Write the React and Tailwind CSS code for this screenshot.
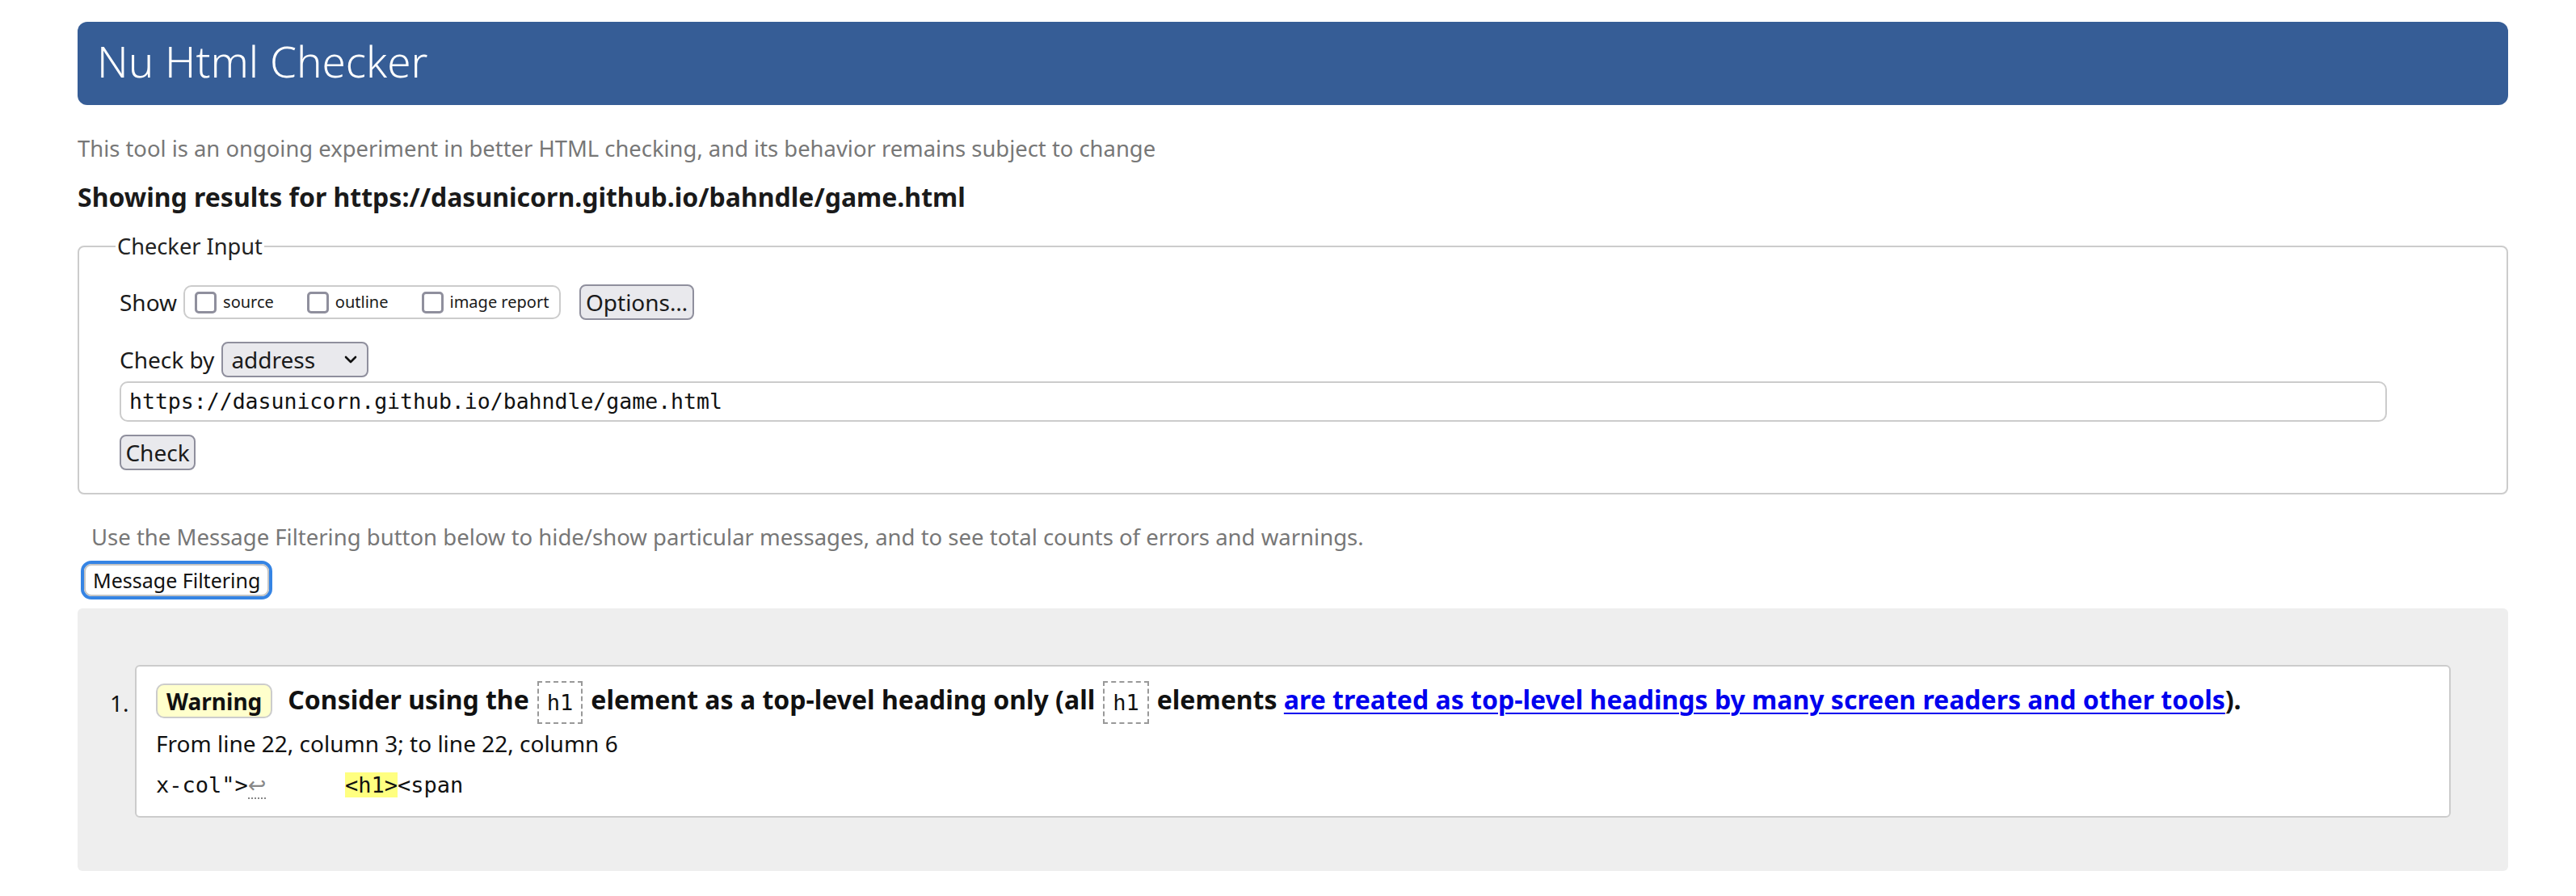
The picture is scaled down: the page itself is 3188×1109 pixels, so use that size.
import React from "react";

const sans = "font-['Noto_Sans','Open_Sans',sans-serif]";
const mono = "font-['DejaVu_Sans_Mono','Liberation_Mono',monospace]";

function Checkbox({ label }) {
  return (
    <span className="flex items-center whitespace-nowrap">
      <span className="w-[27px] h-[27px] border-[3px] border-[#8f8f9d] rounded-[5px] bg-white box-border" />
      <span className="ml-[8px] text-[20px] leading-none text-[#1a1a1a]">{label}</span>
    </span>
  );
}

function Code({ children }) {
  return (
    <span className={`${mono} font-normal inline-block border-2 border-dashed border-[#999] px-[10px] leading-[49px] mx-[10px] align-middle text-[27px]`}>
      {children}
    </span>
  );
}

export default function App() {
  return (
    <div className={`${sans} bg-white min-h-[1109px] pl-[96px] pr-[84px] pt-[27px] text-[#111]`}>
      <header className="h-[103px] bg-[#365d96] rounded-[12px] flex items-center pl-[24px] pb-[6px]">
        <h1 className="text-white text-[53px] font-light leading-none">Nu Html Checker</h1>
      </header>

      <p className="mt-[33px] text-[27.4px] leading-[42px] text-[#777] whitespace-nowrap">
        This tool is an ongoing experiment in better HTML checking, and its behavior remains subject to change
      </p>
      <p className="mt-[18px] text-[32px] leading-[42px] font-bold text-[#1a1a1a] whitespace-nowrap">
        Showing results for https://dasunicorn.github.io/bahndle/game.html
      </p>

      <fieldset className="mt-[20px] border-2 border-[#ccc] rounded-[8px] pl-[45px] pb-[28px]">
        <legend className="text-[27.2px] leading-[39px] text-[#222] px-[2px]">Checker Input</legend>
        <div className="pl-[5px]">
          <div className="mt-[28px] h-[44px] flex items-center">
            <span className="text-[28px] leading-none text-[#1a1a1a]">Show</span>
            <div className="ml-[8px] h-[42px] w-[467px] border-2 border-[#ccc] rounded-[10px] flex items-center pl-[12px] gap-[41px]">
              <Checkbox label="source" />
              <Checkbox label="outline" />
              <Checkbox label="image report" />
            </div>
            <button className="ml-[23px] h-[44px] w-[142px] bg-[#e9e9ed] border-2 border-[#8f8f9d] rounded-[8px] text-[28px] leading-none text-[#1a1a1a]">
              Options…
            </button>
          </div>

          <div className="mt-[27px] h-[44px] flex items-center">
            <span className="text-[28px] leading-none text-[#1a1a1a]">Check by</span>
            <div className="ml-[9px] h-[44px] w-[182px] bg-[#e9e9ed] border-2 border-[#8f8f9d] rounded-[8px] flex items-center pl-[10px] pr-[12px] justify-between">
              <span className="text-[28px] leading-none text-[#1a1a1a]">address</span>
              <svg width="16" height="12" viewBox="0 0 16 12" fill="none">
                <path d="M2 3 L8 9 L14 3" stroke="#111" strokeWidth="2.6" strokeLinecap="round" strokeLinejoin="round" />
              </svg>
            </div>
          </div>

          <div className="mt-[5px] h-[50px] w-[2806px] border-2 border-[#ccc] rounded-[10px] flex items-center pl-[10px]">
            <span className={`${mono} text-[26.5px] leading-none text-[#111]`}>
              https://dasunicorn.github.io/bahndle/game.html
            </span>
          </div>

          <button className="mt-[16px] h-[44px] w-[94px] bg-[#e9e9ed] border-2 border-[#8f8f9d] rounded-[8px] text-[28px] leading-none text-[#1a1a1a] block">
            Check
          </button>
        </div>
      </fieldset>

      <p className="mt-[32px] pl-[17px] text-[27.5px] leading-[42px] text-[#777] whitespace-nowrap">
        Use the Message Filtering button below to hide/show particular messages, and to see total counts of errors and warnings.
      </p>
      <div className="mt-[8px] pl-[4px] flex">
        <button className="h-[48px] rounded-[13px] border-[4px] border-[#3584e4] bg-white p-0">
          <span className="flex h-full items-center rounded-[9px] border-2 border-[#c4c4c4] px-[9px] text-[25px] leading-none text-[#111] whitespace-nowrap">
            Message Filtering
          </span>
        </button>
      </div>

      <div className="mt-[11px] h-[325px] bg-[#eee] rounded-[6px] pt-[70px] pl-[40px] pr-[71px]">
        <ol className="flex items-start">
          <li className="flex w-full">
            <span className="w-[31px] mt-[33px] text-[28px] leading-none text-[#111]">1.</span>
            <div className="flex-1 h-[189px] bg-white border-2 border-[#ccc] rounded-[6px] pl-[24px] pt-[16px]">
              <div className="flex items-center h-[53px] whitespace-nowrap">
                <span className="h-[43px] px-[11px] bg-[#ffffcc] border-2 border-[#ccc] rounded-[10px] flex items-center text-[28px] font-bold leading-none text-[#111]">
                  Warning
                </span>
                <span className="ml-[19px] mt-[4px] text-[32px] font-bold leading-none text-[#111]">
                  Consider using the<Code>h1</Code>element as a top-level heading only (all<Code>h1</Code>elements{" "}
                  <a className="text-[#0000ee] underline underline-offset-[4px] decoration-2">
                    are treated as top-level headings by many screen readers and other tools
                  </a>
                  ).
                </span>
              </div>
              <p className="mt-[8px] text-[28px] leading-[36px] text-[#111]">
                From line 22, column 3; to line 22, column 6
              </p>
              <p className={`${mono} mt-[15px] text-[27px] leading-[38px] text-[#111] whitespace-pre`}>
                {'x-col">'}
                <span className="text-[#888] border-b-2 border-dotted border-[#888] font-['DejaVu_Sans',sans-serif]">↩</span>
                {"      "}
                <span className="bg-[#ffff80]">{"<h1>"}</span>
                {"<span"}
              </p>
            </div>
          </li>
        </ol>
      </div>
    </div>
  );
}
